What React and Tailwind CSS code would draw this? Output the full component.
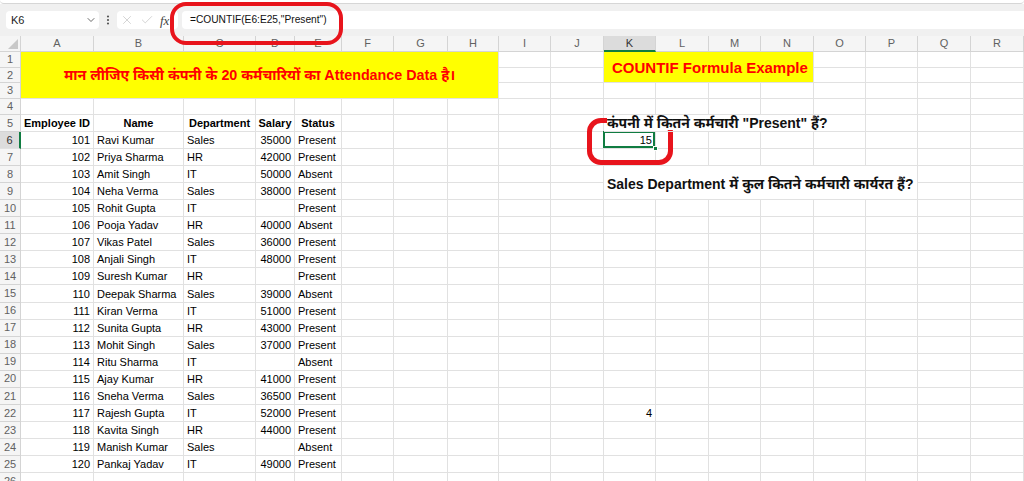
import React from "react";
import { X, Check, ChevronDown, EllipsisVertical } from "lucide-react";

const cols = ["A", "B", "C", "D", "E", "F", "G", "H", "I", "J", "K", "L", "M", "N", "O", "P", "Q", "R"];

const rows = [
  [101, "Ravi Kumar", "Sales", 35000, "Present"],
  [102, "Priya Sharma", "HR", 42000, "Present"],
  [103, "Amit Singh", "IT", 50000, "Absent"],
  [104, "Neha Verma", "Sales", 38000, "Present"],
  [105, "Rohit Gupta", "IT", null, "Present"],
  [106, "Pooja Yadav", "HR", 40000, "Absent"],
  [107, "Vikas Patel", "Sales", 36000, "Present"],
  [108, "Anjali Singh", "IT", 48000, "Present"],
  [109, "Suresh Kumar", "HR", null, "Present"],
  [110, "Deepak Sharma", "Sales", 39000, "Absent"],
  [111, "Kiran Verma", "IT", 51000, "Present"],
  [112, "Sunita Gupta", "HR", 43000, "Present"],
  [113, "Mohit Singh", "Sales", 37000, "Present"],
  [114, "Ritu Sharma", "IT", null, "Absent"],
  [115, "Ajay Kumar", "HR", 41000, "Present"],
  [116, "Sneha Verma", "Sales", 36500, "Present"],
  [117, "Rajesh Gupta", "IT", 52000, "Present"],
  [118, "Kavita Singh", "HR", 44000, "Present"],
  [119, "Manish Kumar", "Sales", null, "Absent"],
  [120, "Pankaj Yadav", "IT", 49000, "Present"],
];

const headers = ["Employee ID", "Name", "Department", "Salary", "Status"];

const base =
  "border-r border-b border-[#e1e1e1] flex items-end whitespace-nowrap leading-[14px] pb-[1px] text-[11px] text-black";

// which cells are hidden under a merged / overflowing cell
function covered(r, c) {
  if (r <= 3 && c >= 1 && c <= 7) return true; // B..H of banner
  if ((r === 2 || r === 3) && c === 0) return true;
  if (r <= 2 && c >= 11 && c <= 13) return true; // L..N
  if (r === 2 && c === 10) return true;
  if (r === 5 && c >= 11 && c <= 14) return true;
  if ((r === 8 && c >= 11 && c <= 15) || (r === 9 && c >= 10 && c <= 15)) return true;
  return false;
}

function Cell({ r, c }) {
  if (covered(r, c)) return null;

  if (r === 1 && c === 0) {
    return (
      <div className="col-span-8 row-span-3 bg-[#ffff00] border-r border-b border-[#e1e1e1] flex items-center justify-center whitespace-nowrap">
        <span className="text-[14.3px] font-bold text-[#ff0000] leading-none">
          मान लीजिए किसी कंपनी के 20 कर्मचारियों का Attendance Data है।
        </span>
      </div>
    );
  }
  if (r === 1 && c === 10) {
    return (
      <div className="col-span-4 row-span-2 bg-[#ffff00] border-r border-b border-[#e1e1e1] flex items-center pl-[8px] whitespace-nowrap">
        <span className="text-[15px] font-bold text-[#ff0000] leading-none">COUNTIF Formula Example</span>
      </div>
    );
  }
  if (r === 5 && c === 10) {
    return (
      <div className="col-span-5 border-b border-r border-[#e1e1e1] flex items-end pl-[3px] pb-[1px] whitespace-nowrap relative z-20">
        <span className="text-[14px] font-bold text-[#111] leading-[14px] bg-white">
          कंपनी में कितने कर्मचारी "Present" हैं?
        </span>
      </div>
    );
  }
  if (r === 8 && c === 10) {
    return (
      <div className="col-span-6 row-span-2 border-b border-r border-[#e1e1e1] flex items-center pl-[3px] pt-[3px] whitespace-nowrap">
        <span className="text-[14px] font-bold text-[#111] leading-[14px]">
          Sales Department में कुल कितने कर्मचारी कार्यरत हैं?
        </span>
      </div>
    );
  }
  if (r === 6 && c === 10) {
    return (
      <div className={base + " justify-end pr-[3px] relative"}>
        15
        <div className="absolute -left-[1px] -top-[1px] right-0 bottom-0 border-2 border-[#107c41]" />
        <div className="absolute -right-[3px] -bottom-[3px] w-[5px] h-[5px] bg-[#107c41] border border-white" />
      </div>
    );
  }
  if (r === 22 && c === 10) {
    return <div className={base + " justify-end pr-[3px]"}>4</div>;
  }
  if (r === 5 && c <= 4) {
    return <div className={base + " justify-center font-bold"}>{headers[c]}</div>;
  }
  if (r >= 6 && r <= 25 && c <= 4) {
    const v = rows[r - 6][c];
    const right = c === 0 || c === 3;
    return (
      <div className={base + (right ? " justify-end pr-[3px]" : " pl-[3px]")}>
        {v === null ? "" : v}
      </div>
    );
  }
  return <div className={base} />;
}

function Corner() {
  return (
    <div className="bg-[#f5f5f5] border-r border-b border-[#d4d4d4] flex items-end justify-end p-[2px]">
      <svg width="10" height="10" viewBox="0 0 10 10">
        <polygon points="10,0 10,10 0,10" fill="#c8c8c8" />
      </svg>
    </div>
  );
}

export default function App() {
  const gridRows = Array.from({ length: 26 }, (_, i) => i + 1);

  return (
    <div className="w-[1024px] h-[481px] overflow-hidden bg-white relative font-['Liberation_Sans','Noto_Sans_Devanagari','Noto_Sans',sans-serif]">
      {/* ribbon bottom edge */}
      <div className="h-[4px] bg-white border-b border-[#d6d6d6] rounded-b-[4px]" />

      {/* formula bar */}
      <div className="h-[32px] bg-[#f0f0f0] flex items-start pt-[7px] pl-[6px]">
        <div className="w-[93px] h-[18px] bg-white rounded-[4px] flex items-center justify-between pl-[5px] pr-[2px] text-[11px] text-[#222]">
          <span>K6</span>
          <ChevronDown size={12} strokeWidth={1.6} className="text-[#444]" />
        </div>
        <div className="w-[18px] h-[18px] flex items-center justify-center text-[#555]">
          <EllipsisVertical size={12} strokeWidth={2.4} />
        </div>
        <div className="w-[61px] h-[18px] bg-white rounded-[4px] flex items-center pl-[3px] gap-[6px]">
          <X size={14} strokeWidth={1.2} className="text-[#c2c2c2]" />
          <Check size={14} strokeWidth={1.2} className="text-[#c2c2c2]" />
          <span className="font-['Liberation_Serif',serif] italic text-[13px] text-[#444] leading-none">fx</span>
        </div>
        <div className="flex-1 ml-[4px] h-[18px] bg-white rounded-l-[4px] flex items-center pl-[8px] text-[10.2px] text-[#111]">
          =COUNTIF(E6:E25,"Present")
        </div>
      </div>

      {/* sheet grid */}
      <div className="grid grid-cols-[21px_73px_90px_72px_39px_47px_52px_54px_51px_52px_53px_52px_53px_52px_53px_52px_52px_53px_53px] grid-rows-[16px_16px_15px_16px_16px_repeat(22,17.05px)]">
        <Corner />
        {cols.map((c) =>
          c === "K" ? (
            <div
              key={c}
              className="bg-[#dcdcdc] border-r border-[#d4d4d4] border-b-2 border-b-[#107c41] flex items-center justify-center text-[11px] text-[#333]"
            >
              {c}
            </div>
          ) : (
            <div
              key={c}
              className="bg-[#f5f5f5] border-r border-b border-[#d4d4d4] flex items-center justify-center text-[11px] text-[#616161]"
            >
              {c}
            </div>
          )
        )}
        {gridRows.map((r) => (
          <React.Fragment key={r}>
            {r === 6 ? (
              <div className="bg-[#dcdcdc] border-b border-[#e1e1e1] border-r-2 border-r-[#107c41] flex items-center justify-center text-[11px] text-[#333]">
                {r}
              </div>
            ) : (
              <div className="bg-[#f5f5f5] border-r border-b border-[#d4d4d4] flex items-center justify-center text-[11px] text-[#616161]">
                {r}
              </div>
            )}
            {cols.map((c, ci) => (
              <Cell key={c} r={r} c={ci} />
            ))}
          </React.Fragment>
        ))}
      </div>

      {/* red annotation marks */}
      <div className="absolute left-[170px] top-[2px] w-[173px] h-[43px] border-[4px] border-[#e8141c] rounded-[16px] z-10" />
      <div className="absolute left-[587px] top-[118px] w-[86px] h-[47px] border-[5px] border-[#e8141c] rounded-[14px] z-10" />
    </div>
  );
}
